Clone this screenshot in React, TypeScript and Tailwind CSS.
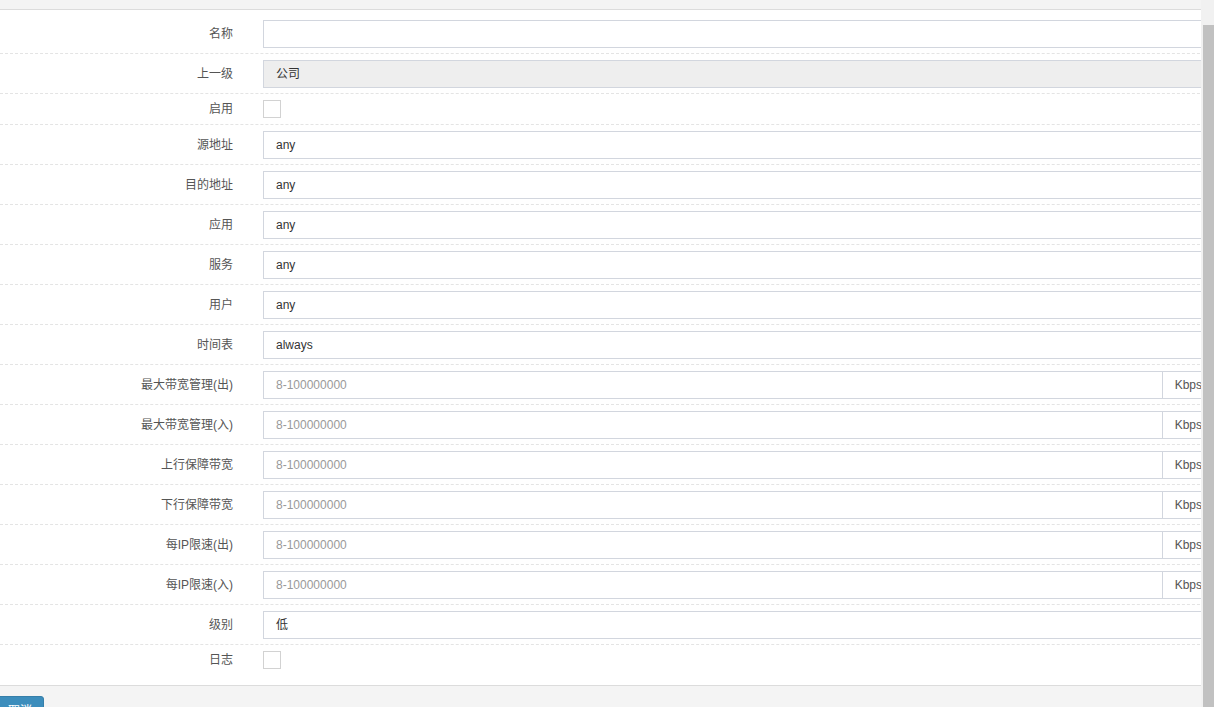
type Field =
  | { label: string; kind: "text"; value?: string; disabled?: boolean }
  | { label: string; kind: "check" }
  | { label: string; kind: "rate" };

const fields: Field[] = [
  { label: "名称", kind: "text" },
  { label: "上一级", kind: "text", value: "公司", disabled: true },
  { label: "启用", kind: "check" },
  { label: "源地址", kind: "text", value: "any" },
  { label: "目的地址", kind: "text", value: "any" },
  { label: "应用", kind: "text", value: "any" },
  { label: "服务", kind: "text", value: "any" },
  { label: "用户", kind: "text", value: "any" },
  { label: "时间表", kind: "text", value: "always" },
  { label: "最大带宽管理(出)", kind: "rate" },
  { label: "最大带宽管理(入)", kind: "rate" },
  { label: "上行保障带宽", kind: "rate" },
  { label: "下行保障带宽", kind: "rate" },
  { label: "每IP限速(出)", kind: "rate" },
  { label: "每IP限速(入)", kind: "rate" },
  { label: "级别", kind: "text", value: "低" },
  { label: "日志", kind: "check" },
];

function Control({ field }: { field: Field }) {
  if (field.kind === "check") {
    return <div className="h-[18px] w-[18px] border border-[#d2d2d2] bg-white" />;
  }
  if (field.kind === "rate") {
    return (
      <div className="flex h-[28px] flex-1 border border-[#d2d6de] bg-white">
        <div className="flex flex-1 items-center pl-[12px] text-[#999]">8-100000000</div>
        <div className="flex items-center border-l border-[#d2d6de] px-[12px] text-[#555]">Kbps</div>
      </div>
    );
  }
  return (
    <div
      className={
        "flex h-[28px] flex-1 items-center border border-[#d2d6de] pl-[12px] text-[#333] " +
        (field.disabled ? "bg-[#eeeeee]" : "bg-white")
      }
    >
      {field.value ?? ""}
    </div>
  );
}

export default function App() {
  return (
    <div
      className="flex h-[707px] w-[1214px] overflow-hidden bg-[#f4f4f4] text-[12px]"
      style={{ fontFamily: '"Liberation Sans", "Noto Sans CJK SC", sans-serif' }}
    >
      <div className="w-[1201px] overflow-hidden">
        <div className="mt-[9px] w-[1230px] border-y border-[#dcdcdc] bg-white pt-[10px] pb-[10px]">
          {fields.map((f, i) => (
            <div
              key={f.label}
              className={
                "flex pr-[15px] " +
                (i === 0
                  ? "h-[33px] items-start"
                  : "items-center border-t border-dashed border-[#e4e4e4] " +
                    (f.kind === "check" ? "h-[31px]" : "h-[40px]"))
              }
            >
              <div className={"w-[233px] text-right text-[#555] " + (i === 0 ? "leading-[28px]" : "")}>
                {f.label}
              </div>
              <div className="ml-[30px] flex flex-1 items-center">
                <Control field={f} />
              </div>
            </div>
          ))}
        </div>
        <div className="mt-[10px] flex">
          <button className="-ml-[4px] rounded-[3px] border border-[#367fa9] bg-[#3c8dbc] px-[11px] py-[5px] text-[12px] leading-[18px] text-white">
            取消
          </button>
        </div>
      </div>
      <div className="h-full w-[13px] bg-[#f1f1f1] pt-[25px] pl-[2px]">
        <div className="h-full w-full bg-[#c1c1c1]" />
      </div>
    </div>
  );
}
